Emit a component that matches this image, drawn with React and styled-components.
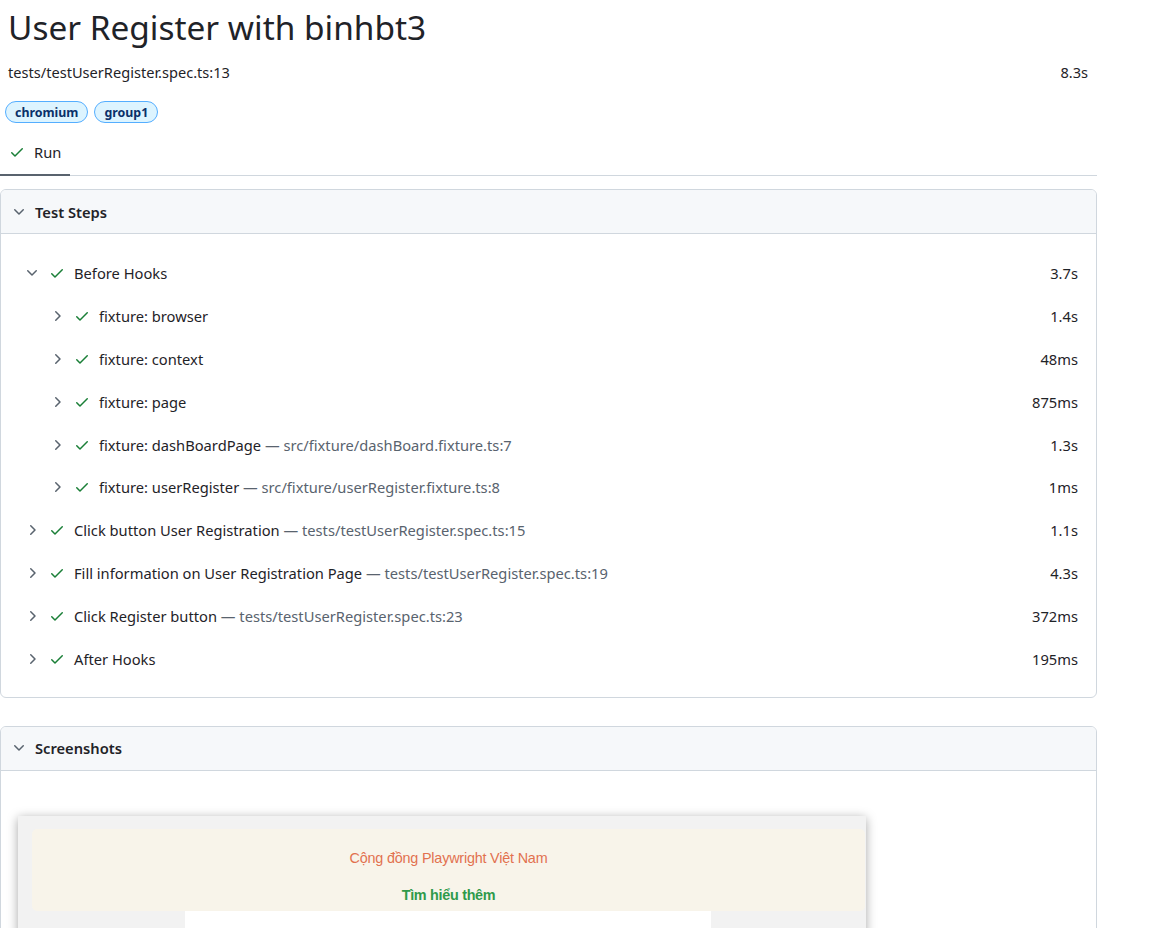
import React from "react";
import styled, { createGlobalStyle } from "styled-components";

const Global = createGlobalStyle`
  html, body { margin: 0; padding: 0; background: #ffffff; }
  body {
    font-family: "Noto Sans", "Open Sans", sans-serif;
    color: #1f2328;
    font-size: 14.7px;
  }
`;

const Page = styled.div`
  width: 1097px;
  display: flex;
  flex-direction: column;
`;

const Header = styled.div`
  padding: 0 9px 0 8px;
  display: flex;
  flex-direction: column;
`;

const Title = styled.h1`
  margin: 7px 0 0;
  font-size: 33.4px;
  font-weight: 400;
  line-height: 40px;
  color: #1f2328;
`;

const MetaRow = styled.div`
  margin-top: 15px;
  display: flex;
  justify-content: space-between;
  font-size: 14.6px;
  line-height: 20px;
  color: #1f2328;
`;

const Labels = styled.div`
  margin: 19px 0 0 -3px;
  display: flex;
  gap: 6px;
`;

const Label = styled.span`
  display: inline-flex;
  align-items: center;
  height: 20px;
  padding: 0 9px;
  border: 1px solid #54aeff;
  border-radius: 12px;
  background: #ddf4ff;
  color: #0a3069;
  font-size: 12.4px;
  font-weight: 700;
`;

const TabBar = styled.div`
  margin-top: 7px;
  display: flex;
  border-bottom: 1px solid #d0d7de;
`;

const Tab = styled.div`
  height: 46px;
  padding: 0 9px 0 9px;
  display: flex;
  align-items: center;
  gap: 9px;
  font-size: 14.7px;
  color: #1f2328;
  border-bottom: 2px solid ${(p) => (p.$active ? "#59636e" : "transparent")};
  margin-bottom: -1px;
  box-sizing: border-box;
  width: 70px;
`;

const Panel = styled.section`
  margin-top: ${(p) => p.$gap}px;
  border: 1px solid #d0d7de;
  border-radius: 6px;
  overflow: hidden;
`;

const PanelHeader = styled.div`
  height: 43px;
  display: flex;
  align-items: center;
  gap: 8px;
  padding: 0 10px;
  background: #f6f8fa;
  border-bottom: 1px solid #d0d7de;
  font-weight: 600;
  font-size: 14.7px;
  color: #1f2328;
`;

const StepsBody = styled.div`
  padding: 18px 0 17px;
  display: flex;
  flex-direction: column;
`;

const StepRow = styled.div`
  height: 42.8px;
  display: flex;
  align-items: center;
  padding: 0 18px 0 ${(p) => 23 + p.$depth * 25}px;
  font-size: 14.7px;
`;

const Chevron = styled.span`
  width: 16px;
  height: 16px;
  display: inline-flex;
  align-items: center;
  justify-content: center;
  color: #59636e;
  margin-right: 9px;
`;

const Check = styled.span`
  width: 16px;
  height: 16px;
  display: inline-flex;
  color: #1a7f37;
  margin-right: 9px;
`;

const StepTitle = styled.span`
  flex: 1;
  white-space: nowrap;
  color: #1f2328;
`;

const StepLoc = styled.span`
  color: #59636e;
`;

const Duration = styled.span`
  color: #1f2328;
`;

const ShotBody = styled.div`
  padding: 45px 17px 40px;
`;

const Shot = styled.div`
  width: 848px;
  height: 300px;
  background: #f2f2f2;
  box-shadow: 0 2px 10px rgba(0, 0, 0, 0.35);
  padding: 13px 1px 0 14px;
  box-sizing: border-box;
  display: flex;
  flex-direction: column;
  align-items: stretch;
`;

const Banner = styled.div`
  height: 82px;
  background: #f8f4ea;
  border-radius: 5px;
  display: flex;
  flex-direction: column;
  align-items: center;
  font-family: "Liberation Sans", Arial, sans-serif;
`;

const BannerTitle = styled.div`
  margin-top: 21px;
  font-size: 14.4px;
  color: #e2714f;
  letter-spacing: -0.2px;
`;

const BannerLink = styled.div`
  margin-top: 21px;
  font-size: 14.4px;
  font-weight: 700;
  color: #2f9a4b;
  letter-spacing: -0.3px;
`;

const FormCard = styled.div`
  margin-left: 153px;
  width: 526px;
  flex: 1;
  background: #ffffff;
`;

const CheckIcon = () => (
  <svg width="16" height="16" viewBox="0 0 16 16" fill="currentColor">
    <path d="M13.78 4.22a.75.75 0 0 1 0 1.060l-7.25 7.25a.75.75 0 0 1-1.06 0L2.22 9.28a.751.751 0 0 1 .018-1.042.751.751 0 0 1 1.042-.018L6 10.94l6.72-6.72a.75.75 0 0 1 1.06 0Z" />
  </svg>
);

const ChevronDown = () => (
  <svg width="16" height="16" viewBox="0 0 16 16" fill="currentColor">
    <path d="M12.78 5.22a.749.749 0 0 1 0 1.06l-4.25 4.25a.749.749 0 0 1-1.060 0L3.22 6.28a.749.749 0 1 1 1.06-1.06L8 8.939l3.72-3.719a.749.749 0 0 1 1.06 0Z" />
  </svg>
);

const ChevronRight = () => (
  <svg width="16" height="16" viewBox="0 0 16 16" fill="currentColor">
    <path d="M6.22 3.22a.75.75 0 0 1 1.06 0l4.25 4.25a.75.75 0 0 1 0 1.06l-4.25 4.25a.751.751 0 0 1-1.042-.018.751.751 0 0 1-.018-1.042L9.94 8 6.22 4.28a.75.75 0 0 1 0-1.060Z" />
  </svg>
);

const steps = [
  { depth: 0, open: true, title: "Before Hooks", time: "3.7s" },
  { depth: 1, title: "fixture: browser", time: "1.4s" },
  { depth: 1, title: "fixture: context", time: "48ms" },
  { depth: 1, title: "fixture: page", time: "875ms" },
  { depth: 1, title: "fixture: dashBoardPage", loc: "src/fixture/dashBoard.fixture.ts:7", time: "1.3s" },
  { depth: 1, title: "fixture: userRegister", loc: "src/fixture/userRegister.fixture.ts:8", time: "1ms" },
  { depth: 0, title: "Click button User Registration", loc: "tests/testUserRegister.spec.ts:15", time: "1.1s" },
  { depth: 0, title: "Fill information on User Registration Page", loc: "tests/testUserRegister.spec.ts:19", time: "4.3s" },
  { depth: 0, title: "Click Register button", loc: "tests/testUserRegister.spec.ts:23", time: "372ms" },
  { depth: 0, title: "After Hooks", time: "195ms" },
];

export default function App() {
  return (
    <>
      <Global />
      <Page>
        <Header>
          <Title>User Register with binhbt3</Title>
          <MetaRow>
            <span>tests/testUserRegister.spec.ts:13</span>
            <span>8.3s</span>
          </MetaRow>
          <Labels>
            <Label>chromium</Label>
            <Label>group1</Label>
          </Labels>
        </Header>
        <TabBar>
          <Tab $active>
            <Check style={{ marginRight: 0 }}>
              <CheckIcon />
            </Check>
            Run
          </Tab>
        </TabBar>
        <Panel $gap={13}>
          <PanelHeader>
            <Chevron style={{ marginRight: 0 }}>
              <ChevronDown />
            </Chevron>
            Test Steps
          </PanelHeader>
          <StepsBody>
            {steps.map((s, i) => (
              <StepRow key={i} $depth={s.depth}>
                <Chevron>{s.open ? <ChevronDown /> : <ChevronRight />}</Chevron>
                <Check>
                  <CheckIcon />
                </Check>
                <StepTitle>
                  {s.title}
                  {s.loc && <StepLoc> — {s.loc}</StepLoc>}
                </StepTitle>
                <Duration>{s.time}</Duration>
              </StepRow>
            ))}
          </StepsBody>
        </Panel>
        <Panel $gap={28}>
          <PanelHeader>
            <Chevron style={{ marginRight: 0 }}>
              <ChevronDown />
            </Chevron>
            Screenshots
          </PanelHeader>
          <ShotBody>
            <Shot>
              <Banner>
                <BannerTitle>Cộng đồng Playwright Việt Nam</BannerTitle>
                <BannerLink>Tìm hiểu thêm</BannerLink>
              </Banner>
              <FormCard />
            </Shot>
          </ShotBody>
        </Panel>
      </Page>
    </>
  );
}
